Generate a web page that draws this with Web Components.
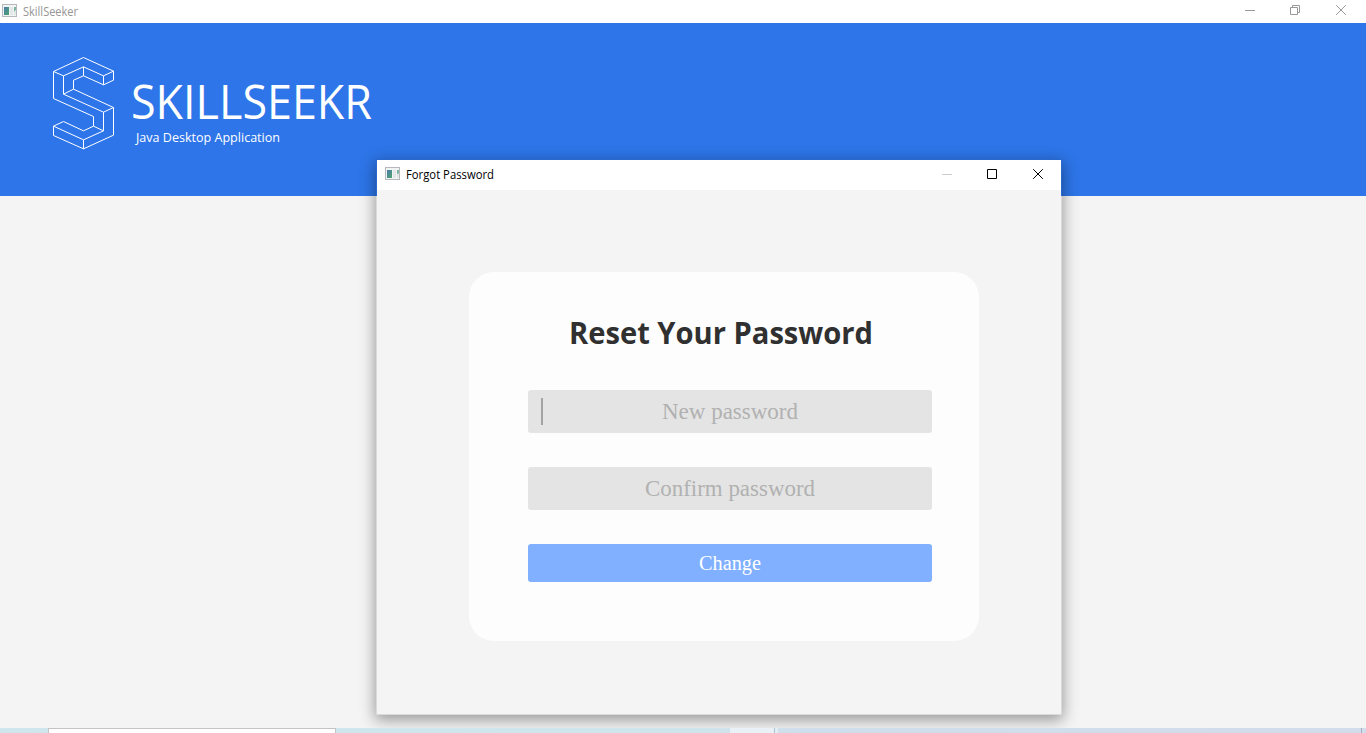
<!DOCTYPE html>
<html lang="en">
<head>
<meta charset="utf-8">
<title>SkillSeeker</title>
<style>
html,body{margin:0;height:100%;overflow:hidden;background:#f4f4f4}
body{font-family:"Open Sans","Noto Sans",sans-serif}
</style>
</head>
<body>
<skill-app></skill-app>
<script>
const define = (name, html, ready) => customElements.define(name, class extends HTMLElement {
  constructor() {
    super();
    this.attachShadow({mode: "open"}).innerHTML = html;
  }
  connectedCallback() { if (ready) ready(this, this.shadowRoot); }
});

// One line of text, condensed or widened to the width given in its attribute.
define("fit-label", `<style>
:host{display:block;white-space:nowrap}
span{display:inline-block;transform-origin:0 50%}
</style><span><slot></slot></span>`, (host, root) => {
  const s = root.querySelector("span");
  const w = parseFloat(host.getAttribute("width"));
  host.style.width = w + "px";
  const natural = s.getBoundingClientRect().width;
  if (natural) s.style.transform = `scaleX(${w / natural})`;
});

define("app-icon", `<style>:host{display:block;width:16px;height:14px}svg{display:block}</style>
<svg width="16" height="14" viewBox="0 0 16 14">
<defs><linearGradient id="g" x1="0" y1="0" x2="1" y2="1"><stop offset="0" stop-color="#4a7cae"/><stop offset="1" stop-color="#4da46c"/></linearGradient></defs>
<rect x=".5" y=".5" width="14" height="12" fill="#f2f4f4" stroke="#b5b9bd"/>
<rect x="2" y="3" width="5" height="8" fill="url(#g)"/>
<rect x="8" y="3" width="3" height="8" fill="#e4e7e7"/>
<path d="M12 3h2v3l-2 2z" fill="#7eb5a0"/><path d="M12 8l2-1v4h-2z" fill="#dfe9e4"/>
</svg>`);

define("window-controls", `<style>
:host{display:block;width:138px;height:22px}svg{display:block}
path{fill:none;stroke:var(--ink,#999)}.min{stroke:var(--min,#999)}
.restore{display:var(--restore,block)}.max{display:var(--max,none)}
</style>
<svg width="138" height="22" viewBox="0 0 138 22">
<path class="min" d="M17 10.5h10"/>
<path class="restore" d="M62.5 7.5h7v7h-7zM64.5 7.5v-2h7v7h-2"/>
<path class="max" d="M62.5 5.5h9v9h-9z"/>
<path d="M108.2 5.2l9.6 9.6M117.8 5.2l-9.6 9.6"/>
</svg>`);

define("brand-logo", `<style>:host{display:block;width:90px;height:115px}svg{display:block}</style>
<svg width="90" height="115" viewBox="0 0 270 345">
<g fill="none" stroke="#fff" stroke-width="3" stroke-linejoin="round" transform="translate(.5 .5)">
<path d="M40 79L130 37L220 78V105L190 119V92L220 78M190 92L130 65L70 92L40 79V160L160 214V243L130 257L70 229L40 243V271L130 311L220 270V187L100 132V105L130 92L190 119M130 65V92M70 92V147L100 132M70 147L190 201L220 187M190 201V257L160 243M190 257L130 284L40 243M130 284V311"/>
</g></svg>`);

define("brand-header", `<style>
:host{display:flex;height:173px;box-sizing:border-box;padding:22px 0 0 40px;background:#2d75e8;color:#fff}
.words{padding:29px 0 0 0}
.name{font-size:48px;line-height:54px;margin-left:1px}
.sub{font-size:13px;line-height:18px;margin:0 0 0 6px}
</style>
<brand-logo></brand-logo>
<div class="words"><fit-label class="name" width="241">SKILLSEEKR</fit-label>
<fit-label class="sub" width="144">Java Desktop Application</fit-label></div>`);

define("window-title", `<style>
:host{display:flex;background:#fff;box-sizing:border-box;font-size:12px}
</style><app-icon></app-icon><slot></slot>`);

define("text-field", `<style>
:host{display:flex;height:43px;align-items:center;justify-content:center;position:relative;background:#e4e4e4;border-radius:3px;color:#b1b1b1;font:23px/43px "Liberation Serif",serif}
:host([focused])::before{content:"";position:absolute;left:13px;top:8px;width:2px;height:27px;background:#a3a3a3}
</style><slot></slot>`);

define("action-button", `<style>
:host{display:flex;height:38px;align-items:center;justify-content:center;border-radius:3px;background:#80b0ff;color:#fff;font:20px/38px "Liberation Serif",serif}
</style><slot></slot>`);

define("password-card", `<style>
:host{display:flex;flex-direction:column;gap:34px;box-sizing:border-box;width:510px;height:369px;padding:38px 47px 0 59px;border-radius:25px;background:#fdfdfd}
.title{font-size:31px;line-height:44px;font-weight:700;color:#303030;margin:0 0 2px 41px}
</style>
<fit-label class="title" width="304">Reset Your Password</fit-label>
<text-field focused><fit-label width="136">New password</fit-label></text-field>
<text-field><fit-label width="170">Confirm password</fit-label></text-field>
<action-button><fit-label width="62">Change</fit-label></action-button>`);

define("password-dialog", `<style>
:host{display:block;box-sizing:border-box;width:686px;height:556px;border:1px solid;border-image:linear-gradient(#2869cf 37px,#dadada 37px) 1;background:#f4f4f4;background-clip:padding-box;box-shadow:0 4px 14px 1px rgba(0,0,0,.38)}
window-title{height:30px;padding:7px 0 0 8px;color:#000}
.t{line-height:16px;margin-left:5px}
window-controls{margin:-3px -2px 0 auto;--ink:#000;--min:#ccc;--restore:none;--max:block}
password-card{margin:82px 0 0 92px}
</style>
<window-title><fit-label class="t" width="88">Forgot Password</fit-label><window-controls></window-controls></window-title>
<password-card></password-card>`);

define("task-bar", `<style>
:host{display:flex;height:5px;background:linear-gradient(90deg,#cfe6ee 0,#cfe5ed 700px,#cfdeec 800px,#d2dcea)}
.search{box-sizing:border-box;width:288px;margin-left:48px;background:#fff;border:1px solid #c4c4c4;border-bottom:0}
.task{width:44px;margin-left:394px;background:#e9f1f6}
.edge{width:1px;background:#a9c4d6}.gap{width:3px;background:#e3edf4}
.desk{width:1px;margin:0 4px 0 auto;background:#a2afbf}
</style><div class="search"></div><div class="task"></div><div class="edge"></div><div class="gap"></div><div class="desk"></div>`);

define("skill-app", `<style>
:host{display:flex;flex-direction:column;height:733px;width:1366px;position:relative;overflow:hidden;background:#f4f4f4}
window-title.main{height:23px;padding:4px 0 0 2px;color:#969696}
.t{line-height:16px;margin-left:5px}
window-title.main window-controls{margin:-4px 0 0 auto}
.body{flex:1}
password-dialog{position:absolute;left:376px;top:159px}
task-bar{position:relative}
</style>
<window-title class="main"><fit-label class="t" width="55">SkillSeeker</fit-label><window-controls></window-controls></window-title>
<brand-header></brand-header>
<div class="body"></div>
<password-dialog></password-dialog>
<task-bar></task-bar>`);
</script>
</body>
</html>
